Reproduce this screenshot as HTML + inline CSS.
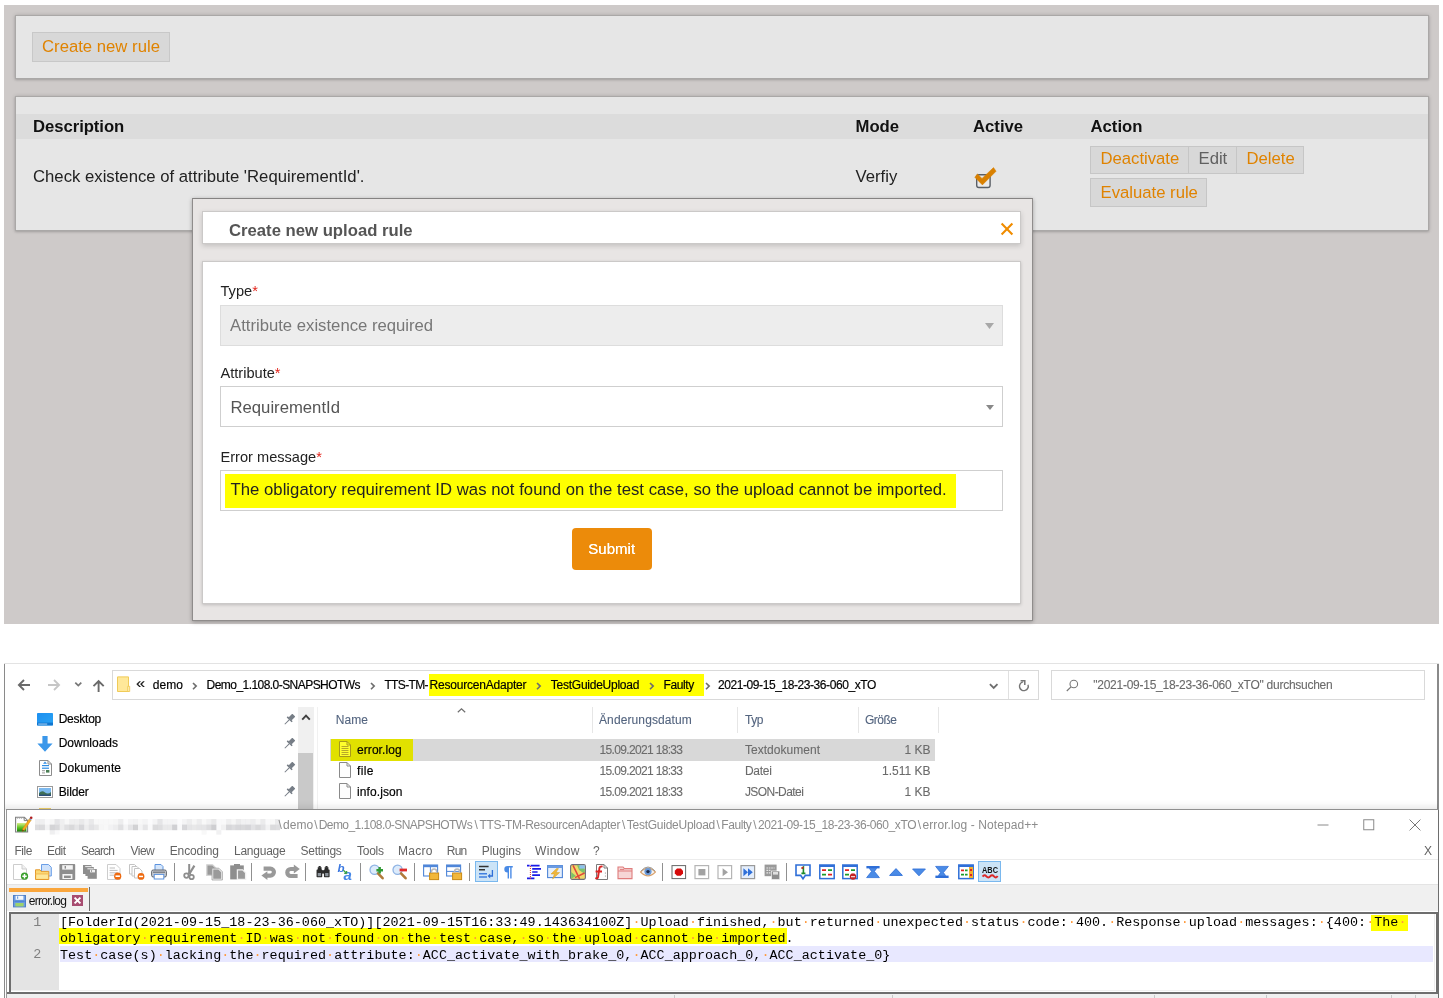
<!DOCTYPE html>
<html lang="en">
<head>
<meta charset="utf-8">
<title>Upload rule error</title>
<style>
*{box-sizing:border-box;margin:0;padding:0}
html,body{width:1443px;height:998px;overflow:hidden;background:#fff}
body{position:relative;font-family:"Liberation Sans",sans-serif;font-size:16px;color:#111}
.a{position:absolute}
svg{overflow:visible}
#page{position:absolute;left:0;top:0;width:1443px;height:998px;will-change:transform}
.t{position:absolute;white-space:pre;line-height:1}
</style>
</head>
<body>
<div id="page">
<div class="a" style="left:4px;top:5px;width:1435px;height:619px;background:#cecac9;"></div>
<div class="a" style="left:15px;top:15px;width:1414px;height:64px;background:#e6e6e6;border:1px solid #aaa8a7;box-shadow:0 0 4px rgba(0,0,0,.16),0 1px 2px rgba(0,0,0,.14);"></div>
<div class="a" style="left:32px;top:32px;width:138px;height:30px;background:#d8d8d8;border:1px solid #c8c8c8;"></div>
<div class="t" id="t1" style="top:39px;font-size:16.7px;color:#e08300;left:42px;letter-spacing:0.01px;">Create new rule</div>
<div class="a" style="left:15px;top:96px;width:1414px;height:135px;background:#e6e6e6;border:1px solid #aaa8a7;box-shadow:0 0 4px rgba(0,0,0,.16),0 1px 2px rgba(0,0,0,.14);"></div>
<div class="a" style="left:16px;top:114px;width:1412px;height:25px;background:#dcdcdc;"></div>
<div class="t" id="t2" style="top:119px;font-size:16.7px;color:#111;left:33px;font-weight:bold;letter-spacing:-0.05px;">Description</div>
<div class="t" id="t3" style="top:119px;font-size:16.7px;color:#111;left:855.5px;font-weight:bold;">Mode</div>
<div class="t" id="t4" style="top:119px;font-size:16.7px;color:#111;left:973px;font-weight:bold;">Active</div>
<div class="t" id="t5" style="top:119px;font-size:16.7px;color:#111;left:1090.5px;font-weight:bold;">Action</div>
<div class="t" id="t6" style="top:169px;font-size:16.7px;color:#222;left:33px;letter-spacing:0.01px;">Check existence of attribute 'RequirementId'.</div>
<div class="t" id="t7" style="top:169px;font-size:16.7px;color:#222;left:855.5px;">Verfiy</div>
<svg class="a" style="left:973px;top:166px;" width="26" height="25" viewBox="0 0 26 25"><rect x="3.7" y="8.7" width="13.4" height="12.8" rx="2.2" fill="#ebebeb" stroke="#5a5f66" stroke-width="1.4"/><path d="M1.8 11.3 L4.4 7.9 L9 12.4 L20.5 1.6 L23.1 5.2 L9.4 18.9 Z" fill="#d98000" stroke="#d98000" stroke-width=".5" stroke-linejoin="round"/></svg>
<div class="a" style="left:1090px;top:146px;width:99px;height:28px;background:#d8d8d8;border:1px solid #c6c6c6;"></div>
<div class="a" style="left:1188px;top:146px;width:49px;height:28px;background:#d8d8d8;border:1px solid #c6c6c6;"></div>
<div class="a" style="left:1236px;top:146px;width:68px;height:28px;background:#d8d8d8;border:1px solid #c6c6c6;"></div>
<div class="a" style="left:1090px;top:178px;width:117px;height:29px;background:#d8d8d8;border:1px solid #c6c6c6;"></div>
<div class="t" id="t8" style="top:151px;font-size:16.7px;color:#e08300;left:1100.5px;letter-spacing:-0.01px;">Deactivate</div>
<div class="t" id="t9" style="top:151px;font-size:16.7px;color:#606060;left:1198.5px;">Edit</div>
<div class="t" id="t10" style="top:151px;font-size:16.7px;color:#e08300;left:1246.5px;">Delete</div>
<div class="t" id="t11" style="top:185px;font-size:16.7px;color:#e08300;left:1100.5px;">Evaluate rule</div>
<div class="a" style="left:192px;top:198px;width:841px;height:423px;background:#e8e5e4;border:1px solid #8f8c8b;box-shadow:0 1px 4px rgba(0,0,0,.30);border-top-color:#858382;"></div>
<div class="a" style="left:202px;top:211px;width:819px;height:33px;background:#fff;border:1px solid #cbc9c8;box-shadow:0 2px 5px rgba(0,0,0,.16);"></div>
<div class="t" id="t12" style="top:223px;font-size:16.7px;color:#555;left:229px;font-weight:bold;">Create new upload rule</div>
<svg class="a" style="left:1000px;top:222px;" width="14" height="14" viewBox="0 0 14 14"><path d="M1.6 1.6 L12.4 12.4 M12.4 1.6 L1.6 12.4" stroke="#f08c00" stroke-width="2.1" fill="none"/></svg>
<div class="a" style="left:202px;top:261px;width:819px;height:343px;background:#fff;border:1px solid #cbc9c8;box-shadow:0 1px 3px rgba(0,0,0,.18);"></div>
<div class="t" id="t13" style="top:284px;font-size:14.6px;color:#222;left:220.5px;">Type<span style="color:#e3241b">*</span></div>
<div class="a" style="left:220px;top:305px;width:783px;height:41px;background:#ededed;border:1px solid #dddddd;"></div>
<div class="t" id="t14" style="top:318px;font-size:16.7px;color:#777;left:230px;">Attribute existence required</div>
<svg class="a" style="left:985px;top:323px;" width="9" height="6" viewBox="0 0 9 6"><path d="M0 0 H9 L4.5 6 Z" fill="#a8a8a8"/></svg>
<div class="t" id="t15" style="top:366px;font-size:14.6px;color:#222;left:220.5px;">Attribute<span style="color:#e3241b">*</span></div>
<div class="a" style="left:220px;top:386px;width:783px;height:41px;background:#fff;border:1px solid #cfcfcf;"></div>
<div class="t" id="t16" style="top:400px;font-size:16.7px;color:#555;left:230.5px;">RequirementId</div>
<svg class="a" style="left:986px;top:404.5px;" width="8" height="5" viewBox="0 0 8 5"><path d="M0 0 H8 L4 5 Z" fill="#888"/></svg>
<div class="t" id="t17" style="top:450px;font-size:14.6px;color:#222;left:220.5px;">Error message<span style="color:#e3241b">*</span></div>
<div class="a" style="left:220px;top:470px;width:783px;height:41px;background:#fff;border:1px solid #cfcfcf;"></div>
<div class="a" style="left:225px;top:474px;width:731px;height:34px;background:#ffff00;"></div>
<div class="t" id="t18" style="top:482px;font-size:16.7px;color:#222;left:230.5px;letter-spacing:0.03px;">The obligatory requirement ID was not found on the test case, so the upload cannot be imported.</div>
<div class="a" style="left:572px;top:528px;width:80px;height:42px;background:#ec8b0a;border-radius:4px;"></div>
<div class="t" id="t19" style="top:541px;font-size:15px;color:#fff;left:588.3px;letter-spacing:0.02px;text-shadow:0 0 .4px #fff;">Submit</div>
<div class="a" style="left:4px;top:663px;width:1435px;height:148px;background:#fff;"></div>
<div class="a" style="left:4px;top:663px;width:1435px;height:1px;background:#e3e3e3;"></div>
<div class="a" style="left:4px;top:664px;width:1px;height:146px;background:#8a8a8a;"></div>
<div class="a" style="left:1437px;top:664px;width:1.6px;height:146px;background:#8a8a8a;"></div>
<svg class="a" style="left:17px;top:678px;" width="15" height="14" viewBox="0 0 15 14"><path d="M13 7 H2.2 M7 2 L1.9 7 L7 12" fill="none" stroke="#6a6a6a" stroke-width="1.9"/></svg>
<svg class="a" style="left:46px;top:678px;" width="15" height="14" viewBox="0 0 15 14"><path d="M2 7 H12.8 M8 2 L13.1 7 L8 12" fill="none" stroke="#c6c6c6" stroke-width="1.8"/></svg>
<svg class="a" style="left:74px;top:681px;" width="9" height="7" viewBox="0 0 9 7"><path d="M1.3 1.6 L4.3 4.6 L7.3 1.6" fill="none" stroke="#777" stroke-width="1.7"/></svg>
<svg class="a" style="left:92px;top:679px;" width="14" height="14" viewBox="0 0 14 14"><path d="M6.6 13 V2.2 M1.5 7.2 L6.6 2 L11.7 7.2" fill="none" stroke="#6a6a6a" stroke-width="1.9"/></svg>
<div class="a" style="left:112px;top:670px;width:927px;height:30px;background:#fff;border:1px solid #d9d9d9;"></div>
<div class="a" style="left:1008px;top:671px;width:1px;height:28px;background:#e0e0e0;"></div>
<svg class="a" style="left:117px;top:676px;" width="14" height="17" viewBox="0 0 14 17"><path d="M.5 .9 H11.5 V15.5 H.5 Z" fill="#ffe899" stroke="#f0cb58" stroke-width="1"/><path d="M10.7 10.3 H12.7 V15.5 H10.7 Z" fill="#fff0b8" stroke="#f0cb58" stroke-width=".9"/></svg>
<div class="a" style="left:428.5px;top:674px;width:275px;height:22px;background:#ffff00;"></div>
<div class="t" id="t20" style="top:675px;font-size:15px;color:#111;left:135.8px;transform:scaleX(1.1);transform-origin:0 0;-webkit-text-stroke:.1px #111;">«</div>
<div class="t" id="t21" style="top:679px;font-size:12px;color:#000;left:152.7px;letter-spacing:0.09px;-webkit-text-stroke:.18px #000;">demo</div>
<div class="t" id="t22" style="top:679px;font-size:12px;color:#000;left:206.6px;letter-spacing:-0.55px;-webkit-text-stroke:.18px #000;">Demo_1.108.0-SNAPSHOTWs</div>
<div class="t" id="t23" style="top:679px;font-size:12px;color:#000;left:384.4px;letter-spacing:-0.63px;-webkit-text-stroke:.18px #000;">TTS-TM-</div>
<div class="t" id="t24" style="top:679px;font-size:12px;color:#000;left:429.5px;letter-spacing:-0.2px;-webkit-text-stroke:.18px #000;">ResourcenAdapter</div>
<div class="t" id="t25" style="top:679px;font-size:12px;color:#000;left:550.8px;letter-spacing:-0.25px;-webkit-text-stroke:.18px #000;">TestGuideUpload</div>
<div class="t" id="t26" style="top:679px;font-size:12px;color:#000;left:663.6px;letter-spacing:-0.4px;-webkit-text-stroke:.18px #000;">Faulty</div>
<div class="t" id="t27" style="top:679px;font-size:12px;color:#000;left:718px;letter-spacing:-0.42px;-webkit-text-stroke:.18px #000;">2021-09-15_18-23-36-060_xTO</div>
<svg class="a" style="left:192.1px;top:681.6px;" width="6" height="8" viewBox="0 0 6 8"><path d="M1 1 L4.2 4.1 L1 7.2" fill="none" stroke="#6e6e6e" stroke-width="1.6"/></svg>
<svg class="a" style="left:369.5px;top:681.6px;" width="6" height="8" viewBox="0 0 6 8"><path d="M1 1 L4.2 4.1 L1 7.2" fill="none" stroke="#6e6e6e" stroke-width="1.6"/></svg>
<svg class="a" style="left:536.2px;top:681.6px;" width="6" height="8" viewBox="0 0 6 8"><path d="M1 1 L4.2 4.1 L1 7.2" fill="none" stroke="#6e6e6e" stroke-width="1.6"/></svg>
<svg class="a" style="left:648.8px;top:681.6px;" width="6" height="8" viewBox="0 0 6 8"><path d="M1 1 L4.2 4.1 L1 7.2" fill="none" stroke="#6e6e6e" stroke-width="1.6"/></svg>
<svg class="a" style="left:704.5px;top:681.6px;" width="6" height="8" viewBox="0 0 6 8"><path d="M1 1 L4.2 4.1 L1 7.2" fill="none" stroke="#6e6e6e" stroke-width="1.6"/></svg>
<svg class="a" style="left:989px;top:683px;" width="10" height="7" viewBox="0 0 10 7"><path d="M.9 1.2 L4.7 5 L8.5 1.2" fill="none" stroke="#6e6e6e" stroke-width="1.8"/></svg>
<svg class="a" style="left:1017px;top:679px;" width="13" height="13" viewBox="0 0 13 13"><path d="M11 5.7 A4.4 4.4 0 1 1 6.1 2.9" fill="none" stroke="#757575" stroke-width="1.4"/><path d="M3.6 1.8 H7.8 V6" fill="none" stroke="#757575" stroke-width="1.5"/></svg>
<div class="a" style="left:1051px;top:670px;width:374px;height:30px;background:#fff;border:1px solid #d9d9d9;"></div>
<svg class="a" style="left:1066px;top:679px;" width="13" height="13" viewBox="0 0 13 13"><circle cx="7.8" cy="5" r="3.8" fill="none" stroke="#777" stroke-width="1.1"/><path d="M5 7.8 L.8 12" stroke="#777" stroke-width="1.2"/></svg>
<div class="t" id="t28" style="top:679px;font-size:12px;color:#6a6a6a;left:1093.3px;letter-spacing:-0.26px;-webkit-text-stroke:.1px #6a6a6a;">"2021-09-15_18-23-36-060_xTO" durchsuchen</div>
<div class="t" id="t29" style="top:713px;font-size:12px;color:#000;left:58.7px;letter-spacing:-0.24px;-webkit-text-stroke:.18px #000;">Desktop</div>
<div class="t" id="t30" style="top:737px;font-size:12px;color:#000;left:58.7px;letter-spacing:-0.01px;-webkit-text-stroke:.18px #000;">Downloads</div>
<div class="t" id="t31" style="top:762px;font-size:12px;color:#000;left:58.7px;letter-spacing:0.12px;-webkit-text-stroke:.18px #000;">Dokumente</div>
<div class="t" id="t32" style="top:786px;font-size:12px;color:#000;left:58.7px;letter-spacing:-0.1px;-webkit-text-stroke:.18px #000;">Bilder</div>
<svg class="a" style="left:37px;top:713px;" width="16" height="13" viewBox="0 0 16 13"><defs><linearGradient id="dg" x1="0" y1="0" x2="1" y2="1"><stop offset="0" stop-color="#1c8ff0"/><stop offset="1" stop-color="#2aa4f4"/></linearGradient></defs><rect x="0" y="0" width="16" height="12.4" rx=".8" fill="url(#dg)"/><rect x="0" y="9.6" width="16" height="2.8" fill="#1176cf"/><rect x="1.2" y="10.6" width="9" height=".9" fill="#bfe0fa"/></svg>
<svg class="a" style="left:37px;top:735.5px;" width="16" height="16" viewBox="0 0 16 16"><path d="M5.4 0 H10.6 V7.4 H15.6 L8 15.8 L.4 7.4 H5.4 Z" fill="#3b97ea"/></svg>
<svg class="a" style="left:39px;top:760px;" width="13" height="16" viewBox="0 0 13 16"><path d="M.5 .5 H9 L12.5 4 V15.5 H.5 Z" fill="#fff" stroke="#8c8c8c"/><path d="M9 .5 V4 H12.5" fill="none" stroke="#8c8c8c"/><rect x="3" y="5" width="7" height="1.2" fill="#2f8de4"/><rect x="3" y="7.6" width="7" height="1.2" fill="#2f8de4"/><rect x="3" y="10.2" width="3" height="1" fill="#9a9a9a"/><rect x="7" y="10" width="3.4" height="2.6" fill="#4a7e54"/><rect x="3" y="12.4" width="3" height="1" fill="#9a9a9a"/><path d="M4 3.8 L6 1.6 L8 3.8 Z" fill="#2f8de4"/></svg>
<svg class="a" style="left:37px;top:786px;" width="16" height="12" viewBox="0 0 16 12"><rect x=".5" y=".5" width="15" height="11" fill="#fff" stroke="#9a9a9a"/><rect x="2" y="2" width="12" height="8" fill="#7db9ee"/><path d="M2 7 Q5 4 8 6.4 T14 6 V10 H2 Z" fill="#3f6f56"/><rect x="2" y="8.6" width="12" height="1.4" fill="#2c4d7a"/></svg>
<svg class="a" style="left:283.5px;top:714px;" width="11" height="11" viewBox="0 0 11 11"><g transform="rotate(45 5.5 5.5)" fill="#767d86"><rect x="3.4" y="-0.6" width="4.2" height="5.2" rx=".5"/><rect x="2" y="4.4" width="7" height="1.6" rx=".4"/><rect x="5" y="6" width="1" height="6.2"/></g></svg>
<svg class="a" style="left:283.5px;top:738px;" width="11" height="11" viewBox="0 0 11 11"><g transform="rotate(45 5.5 5.5)" fill="#767d86"><rect x="3.4" y="-0.6" width="4.2" height="5.2" rx=".5"/><rect x="2" y="4.4" width="7" height="1.6" rx=".4"/><rect x="5" y="6" width="1" height="6.2"/></g></svg>
<svg class="a" style="left:283.5px;top:762px;" width="11" height="11" viewBox="0 0 11 11"><g transform="rotate(45 5.5 5.5)" fill="#767d86"><rect x="3.4" y="-0.6" width="4.2" height="5.2" rx=".5"/><rect x="2" y="4.4" width="7" height="1.6" rx=".4"/><rect x="5" y="6" width="1" height="6.2"/></g></svg>
<svg class="a" style="left:283.5px;top:786px;" width="11" height="11" viewBox="0 0 11 11"><g transform="rotate(45 5.5 5.5)" fill="#767d86"><rect x="3.4" y="-0.6" width="4.2" height="5.2" rx=".5"/><rect x="2" y="4.4" width="7" height="1.6" rx=".4"/><rect x="5" y="6" width="1" height="6.2"/></g></svg>
<div class="a" style="left:298px;top:707px;width:16px;height:103px;background:#f0f0f0;"></div>
<svg class="a" style="left:301px;top:713px;" width="10" height="8" viewBox="0 0 10 8"><path d="M1.2 6.6 L5 2.6 L8.8 6.6" fill="none" stroke="#404040" stroke-width="1.9"/></svg>
<div class="a" style="left:298px;top:753px;width:15px;height:57px;background:#c9c9c9;"></div>
<div class="a" style="left:316.5px;top:707px;width:1px;height:103px;background:#f1f1f1;"></div>
<div class="t" id="t33" style="top:714px;font-size:12px;color:#53647f;left:335.8px;letter-spacing:0.06px;-webkit-text-stroke:.1px #53647f;">Name</div>
<div class="t" id="t34" style="top:714px;font-size:12px;color:#53647f;left:599px;letter-spacing:0.11px;-webkit-text-stroke:.1px #53647f;">Änderungsdatum</div>
<div class="t" id="t35" style="top:714px;font-size:12px;color:#53647f;left:744.9px;letter-spacing:-0.42px;-webkit-text-stroke:.1px #53647f;">Typ</div>
<div class="t" id="t36" style="top:714px;font-size:12px;color:#53647f;left:865px;letter-spacing:-0.5px;-webkit-text-stroke:.1px #53647f;">Größe</div>
<svg class="a" style="left:456.5px;top:707.5px;" width="9" height="5" viewBox="0 0 9 5"><path d="M.8 4.3 L4.5 .9 L8.2 4.3" fill="none" stroke="#6e6e6e" stroke-width="1.2"/></svg>
<div class="a" style="left:591.5px;top:707px;width:1px;height:26px;background:#e6e6e6;"></div>
<div class="a" style="left:737px;top:707px;width:1px;height:26px;background:#e6e6e6;"></div>
<div class="a" style="left:857.5px;top:707px;width:1px;height:26px;background:#e6e6e6;"></div>
<div class="a" style="left:938px;top:707px;width:1px;height:26px;background:#e6e6e6;"></div>
<div class="a" style="left:330px;top:739px;width:605px;height:22px;background:#d8d8d8;"></div>
<div class="a" style="left:330.5px;top:738.5px;width:82.5px;height:22.5px;background:#e1e100;"></div>
<svg class="a" style="left:338.5px;top:741px;" width="12" height="16" viewBox="0 0 12 16"><path d="M.5 .5 H8 L11.5 4 V15.5 H.5 Z" fill="#ffff2e" stroke="#a89a1a" stroke-width="1"/><path d="M8 .5 V4 H11.5" fill="none" stroke="#a89a1a" stroke-width="1"/><rect x="2.5" y="5" width="7" height="1" fill="#b8a828"/><rect x="2.5" y="7" width="7" height="1" fill="#b8a828"/><rect x="2.5" y="9" width="7" height="1" fill="#b8a828"/><rect x="2.5" y="11" width="7" height="1" fill="#b8a828"/><rect x="2.5" y="13" width="7" height="1" fill="#b8a828"/></svg>
<svg class="a" style="left:338.5px;top:762px;" width="12" height="16" viewBox="0 0 12 16"><path d="M.5 .5 H8 L11.5 4 V15.5 H.5 Z" fill="#fdfdfd" stroke="#8a8a8a" stroke-width="1"/><path d="M8 .5 V4 H11.5" fill="none" stroke="#8a8a8a" stroke-width="1"/></svg>
<svg class="a" style="left:338.5px;top:783px;" width="12" height="16" viewBox="0 0 12 16"><path d="M.5 .5 H8 L11.5 4 V15.5 H.5 Z" fill="#fdfdfd" stroke="#8a8a8a" stroke-width="1"/><path d="M8 .5 V4 H11.5" fill="none" stroke="#8a8a8a" stroke-width="1"/></svg>
<div class="t" id="t37" style="top:744px;font-size:12px;color:#000;left:357px;letter-spacing:0.07px;-webkit-text-stroke:.18px #000;">error.log</div>
<div class="t" id="t38" style="top:765px;font-size:12px;color:#000;left:357px;letter-spacing:0.32px;-webkit-text-stroke:.18px #000;">file</div>
<div class="t" id="t39" style="top:786px;font-size:12px;color:#000;left:357px;letter-spacing:0.1px;-webkit-text-stroke:.18px #000;">info.json</div>
<div class="t" id="t40" style="top:744px;font-size:12px;color:#6b6b6b;left:599.5px;letter-spacing:-0.66px;-webkit-text-stroke:.1px #6b6b6b;">15.09.2021 18:33</div>
<div class="t" id="t41" style="top:744px;font-size:12px;color:#6b6b6b;left:744.9px;letter-spacing:0.05px;-webkit-text-stroke:.1px #6b6b6b;">Textdokument</div>
<div class="t" id="t42" style="top:744px;font-size:12px;color:#6b6b6b;right:512.5px;-webkit-text-stroke:.1px #6b6b6b;">1 KB</div>
<div class="t" id="t43" style="top:765px;font-size:12px;color:#6b6b6b;left:599.5px;letter-spacing:-0.66px;-webkit-text-stroke:.1px #6b6b6b;">15.09.2021 18:33</div>
<div class="t" id="t44" style="top:765px;font-size:12px;color:#6b6b6b;left:744.9px;letter-spacing:-0.25px;-webkit-text-stroke:.1px #6b6b6b;">Datei</div>
<div class="t" id="t45" style="top:765px;font-size:12px;color:#6b6b6b;right:512.5px;-webkit-text-stroke:.1px #6b6b6b;">1.511 KB</div>
<div class="t" id="t46" style="top:786px;font-size:12px;color:#6b6b6b;left:599.5px;letter-spacing:-0.66px;-webkit-text-stroke:.1px #6b6b6b;">15.09.2021 18:33</div>
<div class="t" id="t47" style="top:786px;font-size:12px;color:#6b6b6b;left:744.9px;letter-spacing:-0.56px;-webkit-text-stroke:.1px #6b6b6b;">JSON-Datei</div>
<div class="t" id="t48" style="top:786px;font-size:12px;color:#6b6b6b;right:512.5px;-webkit-text-stroke:.1px #6b6b6b;">1 KB</div>
<div class="a" style="left:39px;top:807.5px;width:12px;height:2.5px;background:#f3d36b;"></div>
<div class="a" style="left:5px;top:799px;width:1433px;height:11px;background:linear-gradient(to bottom,rgba(0,0,0,0),rgba(0,0,0,.015) 40%,rgba(0,0,0,.085));"></div>
<div class="a" style="left:5px;top:810px;width:1434px;height:188px;background:#fff;"></div>
<div class="a" style="left:6px;top:809px;width:1433px;height:1px;background:#8f8f8f;"></div>
<div class="a" style="left:4px;top:809px;width:1px;height:189px;background:#8a8a8a;"></div>
<div class="a" style="left:6px;top:810px;width:1px;height:188px;background:#999999;"></div>
<div class="a" style="left:1438px;top:810px;width:1px;height:188px;background:#6e6e6e;"></div>
<svg class="a" style="left:14.5px;top:816px;" width="17" height="17" viewBox="0 0 17 17"><defs><linearGradient id="ng" x1="0" y1="0" x2="0" y2="1"><stop offset="0" stop-color="#d8ee8a"/><stop offset=".55" stop-color="#58c020"/><stop offset="1" stop-color="#1c7a10"/></linearGradient></defs><path d="M.6 1.2 H9.4 L12.6 4.4 V16 H.6 Z" fill="#fff" stroke="#7e7e7e" stroke-width="1.1"/><path d="M9.2 1.2 V4.6 H12.6" fill="none" stroke="#7e7e7e" stroke-width="1"/><path d="M1.4 1.2 l1 1.3 1 -1.3 1 1.3 1 -1.3 1 1.3 1 -1.3 1 1.3" fill="none" stroke="#9a9a9a" stroke-width=".8"/><rect x="2" y="7" width="9.4" height="8.6" fill="url(#ng)"/><path d="M14.4 2.6 L16.2 4 L9.4 14.2 L7.4 15.4 L7.6 13 Z" fill="#f5a81c" stroke="#d88a10" stroke-width=".5"/><path d="M14.1 3 L14.9 1.9 L16.7 3.2 L15.9 4.4 Z" fill="#7f9fd0"/><circle cx="16.2" cy="1.8" r="1.3" fill="#b01c1c"/><path d="M7.5 13.6 L7.3 15.5 L9 14.6 Z" fill="#3a2a1a"/></svg>
<svg class="a" style="left:35px;top:818px;" width="246" height="18" viewBox="0 0 246 18"><rect x="0" y="1" width="5" height="5.6" fill="#4a4a55" fill-opacity="0.09"/><rect x="0" y="6.6" width="5" height="5.6" fill="#4a4a55" fill-opacity="0.19"/><rect x="4.9" y="1" width="5" height="5.6" fill="#4a4a55" fill-opacity="0.09"/><rect x="4.9" y="6.6" width="5" height="5.6" fill="#4a4a55" fill-opacity="0.20"/><rect x="9.8" y="1" width="5" height="5.6" fill="#4a4a55" fill-opacity="0.03"/><rect x="9.8" y="6.6" width="5" height="5.6" fill="#4a4a55" fill-opacity="0.07"/><rect x="14.7" y="1" width="5" height="5.6" fill="#4a4a55" fill-opacity="0.05"/><rect x="14.7" y="6.6" width="5" height="5.6" fill="#4a4a55" fill-opacity="0.24"/><rect x="14.7" y="12.2" width="5" height="4.4" fill="#4a4a55" fill-opacity="0.09"/><rect x="19.6" y="1" width="5" height="5.6" fill="#4a4a55" fill-opacity="0.14"/><rect x="19.6" y="6.6" width="5" height="5.6" fill="#4a4a55" fill-opacity="0.21"/><rect x="19.6" y="12.2" width="5" height="4.4" fill="#4a4a55" fill-opacity="0.03"/><rect x="24.5" y="1" width="5" height="5.6" fill="#4a4a55" fill-opacity="0.09"/><rect x="24.5" y="6.6" width="5" height="5.6" fill="#4a4a55" fill-opacity="0.10"/><rect x="29.4" y="1" width="5" height="5.6" fill="#4a4a55" fill-opacity="0.04"/><rect x="29.4" y="6.6" width="5" height="5.6" fill="#4a4a55" fill-opacity="0.17"/><rect x="34.3" y="1" width="5" height="5.6" fill="#4a4a55" fill-opacity="0.09"/><rect x="34.3" y="6.6" width="5" height="5.6" fill="#4a4a55" fill-opacity="0.21"/><rect x="39.2" y="1" width="5" height="5.6" fill="#4a4a55" fill-opacity="0.09"/><rect x="39.2" y="6.6" width="5" height="5.6" fill="#4a4a55" fill-opacity="0.14"/><rect x="44.1" y="1" width="5" height="5.6" fill="#4a4a55" fill-opacity="0.12"/><rect x="44.1" y="6.6" width="5" height="5.6" fill="#4a4a55" fill-opacity="0.22"/><rect x="49" y="1" width="5" height="5.6" fill="#4a4a55" fill-opacity="0.07"/><rect x="49" y="6.6" width="5" height="5.6" fill="#4a4a55" fill-opacity="0.10"/><rect x="53.9" y="1" width="5" height="5.6" fill="#4a4a55" fill-opacity="0.12"/><rect x="53.9" y="6.6" width="5" height="5.6" fill="#4a4a55" fill-opacity="0.16"/><rect x="58.8" y="1" width="5" height="5.6" fill="#4a4a55" fill-opacity="0.04"/><rect x="58.8" y="6.6" width="5" height="5.6" fill="#4a4a55" fill-opacity="0.13"/><rect x="63.7" y="1" width="5" height="5.6" fill="#4a4a55" fill-opacity="0.04"/><rect x="63.7" y="6.6" width="5" height="5.6" fill="#4a4a55" fill-opacity="0.05"/><rect x="68.6" y="1" width="5" height="5.6" fill="#4a4a55" fill-opacity="0.04"/><rect x="68.6" y="6.6" width="5" height="5.6" fill="#4a4a55" fill-opacity="0.04"/><rect x="73.5" y="1" width="5" height="5.6" fill="#4a4a55" fill-opacity="0.04"/><rect x="73.5" y="6.6" width="5" height="5.6" fill="#4a4a55" fill-opacity="0.07"/><rect x="78.4" y="1" width="5" height="5.6" fill="#4a4a55" fill-opacity="0.05"/><rect x="78.4" y="6.6" width="5" height="5.6" fill="#4a4a55" fill-opacity="0.10"/><rect x="83.3" y="1" width="5" height="5.6" fill="#4a4a55" fill-opacity="0.10"/><rect x="83.3" y="6.6" width="5" height="5.6" fill="#4a4a55" fill-opacity="0.17"/><rect x="88.2" y="1" width="5" height="5.6" fill="#4a4a55" fill-opacity="0.02"/><rect x="88.2" y="6.6" width="5" height="5.6" fill="#4a4a55" fill-opacity="0.06"/><rect x="93.1" y="1" width="5" height="5.6" fill="#4a4a55" fill-opacity="0.06"/><rect x="93.1" y="6.6" width="5" height="5.6" fill="#4a4a55" fill-opacity="0.14"/><rect x="98" y="1" width="5" height="5.6" fill="#4a4a55" fill-opacity="0.07"/><rect x="98" y="6.6" width="5" height="5.6" fill="#4a4a55" fill-opacity="0.25"/><rect x="102.9" y="1" width="5" height="5.6" fill="#4a4a55" fill-opacity="0.04"/><rect x="102.9" y="6.6" width="5" height="5.6" fill="#4a4a55" fill-opacity="0.06"/><rect x="107.8" y="1" width="5" height="5.6" fill="#4a4a55" fill-opacity="0.06"/><rect x="107.8" y="6.6" width="5" height="5.6" fill="#4a4a55" fill-opacity="0.14"/><rect x="112.7" y="1" width="5" height="5.6" fill="#4a4a55" fill-opacity="0.02"/><rect x="112.7" y="6.6" width="5" height="5.6" fill="#4a4a55" fill-opacity="0.03"/><rect x="117.6" y="1" width="5" height="5.6" fill="#4a4a55" fill-opacity="0.06"/><rect x="117.6" y="6.6" width="5" height="5.6" fill="#4a4a55" fill-opacity="0.20"/><rect x="122.5" y="1" width="5" height="5.6" fill="#4a4a55" fill-opacity="0.14"/><rect x="122.5" y="6.6" width="5" height="5.6" fill="#4a4a55" fill-opacity="0.18"/><rect x="127.4" y="1" width="5" height="5.6" fill="#4a4a55" fill-opacity="0.06"/><rect x="127.4" y="6.6" width="5" height="5.6" fill="#4a4a55" fill-opacity="0.12"/><rect x="132.3" y="1" width="5" height="5.6" fill="#4a4a55" fill-opacity="0.06"/><rect x="132.3" y="6.6" width="5" height="5.6" fill="#4a4a55" fill-opacity="0.12"/><rect x="137.2" y="1" width="5" height="5.6" fill="#4a4a55" fill-opacity="0.06"/><rect x="137.2" y="6.6" width="5" height="5.6" fill="#4a4a55" fill-opacity="0.26"/><rect x="142.1" y="1" width="5" height="5.6" fill="#4a4a55" fill-opacity="0.02"/><rect x="142.1" y="6.6" width="5" height="5.6" fill="#4a4a55" fill-opacity="0.03"/><rect x="147" y="1" width="5" height="5.6" fill="#4a4a55" fill-opacity="0.06"/><rect x="147" y="6.6" width="5" height="5.6" fill="#4a4a55" fill-opacity="0.22"/><rect x="151.9" y="1" width="5" height="5.6" fill="#4a4a55" fill-opacity="0.10"/><rect x="151.9" y="6.6" width="5" height="5.6" fill="#4a4a55" fill-opacity="0.14"/><rect x="156.8" y="1" width="5" height="5.6" fill="#4a4a55" fill-opacity="0.05"/><rect x="156.8" y="6.6" width="5" height="5.6" fill="#4a4a55" fill-opacity="0.13"/><rect x="161.7" y="1" width="5" height="5.6" fill="#4a4a55" fill-opacity="0.10"/><rect x="161.7" y="6.6" width="5" height="5.6" fill="#4a4a55" fill-opacity="0.14"/><rect x="166.6" y="1" width="5" height="5.6" fill="#4a4a55" fill-opacity="0.04"/><rect x="166.6" y="6.6" width="5" height="5.6" fill="#4a4a55" fill-opacity="0.14"/><rect x="166.6" y="12.2" width="5" height="4.4" fill="#4a4a55" fill-opacity="0.04"/><rect x="171.5" y="1" width="5" height="5.6" fill="#4a4a55" fill-opacity="0.08"/><rect x="171.5" y="6.6" width="5" height="5.6" fill="#4a4a55" fill-opacity="0.19"/><rect x="176.4" y="1" width="5" height="5.6" fill="#4a4a55" fill-opacity="0.13"/><rect x="176.4" y="6.6" width="5" height="5.6" fill="#4a4a55" fill-opacity="0.27"/><rect x="181.3" y="1" width="5" height="5.6" fill="#4a4a55" fill-opacity="0.03"/><rect x="181.3" y="6.6" width="5" height="5.6" fill="#4a4a55" fill-opacity="0.03"/><rect x="181.3" y="12.2" width="5" height="4.4" fill="#4a4a55" fill-opacity="0.08"/><rect x="186.2" y="1" width="5" height="5.6" fill="#4a4a55" fill-opacity="0.03"/><rect x="186.2" y="6.6" width="5" height="5.6" fill="#4a4a55" fill-opacity="0.08"/><rect x="191.1" y="1" width="5" height="5.6" fill="#4a4a55" fill-opacity="0.09"/><rect x="191.1" y="6.6" width="5" height="5.6" fill="#4a4a55" fill-opacity="0.22"/><rect x="196" y="1" width="5" height="5.6" fill="#4a4a55" fill-opacity="0.05"/><rect x="196" y="6.6" width="5" height="5.6" fill="#4a4a55" fill-opacity="0.19"/><rect x="200.9" y="1" width="5" height="5.6" fill="#4a4a55" fill-opacity="0.11"/><rect x="200.9" y="6.6" width="5" height="5.6" fill="#4a4a55" fill-opacity="0.22"/><rect x="205.8" y="1" width="5" height="5.6" fill="#4a4a55" fill-opacity="0.08"/><rect x="205.8" y="6.6" width="5" height="5.6" fill="#4a4a55" fill-opacity="0.21"/><rect x="210.7" y="1" width="5" height="5.6" fill="#4a4a55" fill-opacity="0.08"/><rect x="210.7" y="6.6" width="5" height="5.6" fill="#4a4a55" fill-opacity="0.23"/><rect x="215.6" y="1" width="5" height="5.6" fill="#4a4a55" fill-opacity="0.10"/><rect x="215.6" y="6.6" width="5" height="5.6" fill="#4a4a55" fill-opacity="0.16"/><rect x="220.5" y="1" width="5" height="5.6" fill="#4a4a55" fill-opacity="0.05"/><rect x="220.5" y="6.6" width="5" height="5.6" fill="#4a4a55" fill-opacity="0.21"/><rect x="225.4" y="1" width="5" height="5.6" fill="#4a4a55" fill-opacity="0.11"/><rect x="225.4" y="6.6" width="5" height="5.6" fill="#4a4a55" fill-opacity="0.16"/><rect x="230.3" y="1" width="5" height="5.6" fill="#4a4a55" fill-opacity="0.03"/><rect x="230.3" y="6.6" width="5" height="5.6" fill="#4a4a55" fill-opacity="0.07"/><rect x="235.2" y="1" width="5" height="5.6" fill="#4a4a55" fill-opacity="0.04"/><rect x="235.2" y="6.6" width="5" height="5.6" fill="#4a4a55" fill-opacity="0.20"/><rect x="240.1" y="1" width="5" height="5.6" fill="#4a4a55" fill-opacity="0.11"/><rect x="240.1" y="6.6" width="5" height="5.6" fill="#4a4a55" fill-opacity="0.18"/></svg>
<div class="t" id="t49" style="top:819px;font-size:12px;color:#8c8c8c;left:278.55px;">\</div>
<div class="t" id="t50" style="top:819px;font-size:12px;color:#8c8c8c;left:283px;letter-spacing:0.09px;">demo</div>
<div class="t" id="t51" style="top:819px;font-size:12px;color:#8c8c8c;left:314.3px;">\</div>
<div class="t" id="t52" style="top:819px;font-size:12px;color:#8c8c8c;left:318.7px;letter-spacing:-0.55px;">Demo_1.108.0-SNAPSHOTWs</div>
<div class="t" id="t53" style="top:819px;font-size:12px;color:#8c8c8c;left:474.4px;">\</div>
<div class="t" id="t54" style="top:819px;font-size:12px;color:#8c8c8c;left:479.6px;letter-spacing:-0.33px;">TTS-TM-ResourcenAdapter</div>
<div class="t" id="t55" style="top:819px;font-size:12px;color:#8c8c8c;left:621.95px;">\</div>
<div class="t" id="t56" style="top:819px;font-size:12px;color:#8c8c8c;left:626.8px;letter-spacing:-0.26px;">TestGuideUpload</div>
<div class="t" id="t57" style="top:819px;font-size:12px;color:#8c8c8c;left:716.55px;">\</div>
<div class="t" id="t58" style="top:819px;font-size:12px;color:#8c8c8c;left:721.3px;letter-spacing:-0.44px;">Faulty</div>
<div class="t" id="t59" style="top:819px;font-size:12px;color:#8c8c8c;left:753.15px;">\</div>
<div class="t" id="t60" style="top:819px;font-size:12px;color:#8c8c8c;left:757.9px;letter-spacing:-0.41px;">2021-09-15_18-23-36-060_xTO</div>
<div class="t" id="t61" style="top:819px;font-size:12px;color:#8c8c8c;left:917.75px;">\</div>
<div class="t" id="t62" style="top:819px;font-size:12px;color:#8c8c8c;left:922.5px;letter-spacing:0.09px;">error.log - Notepad++</div>
<svg class="a" style="left:1317px;top:819px;" width="12" height="12" viewBox="0 0 12 12"><path d="M.5 6 H11.5" stroke="#8a8a8a" stroke-width="1"/></svg>
<svg class="a" style="left:1363px;top:818.5px;" width="11.5" height="11.5" viewBox="0 0 11.5 11.5"><rect x=".75" y=".75" width="10" height="10" fill="none" stroke="#8a8a8a" stroke-width="1"/></svg>
<svg class="a" style="left:1409px;top:818.5px;" width="12" height="12" viewBox="0 0 12 12"><path d="M.6 .6 L11.4 11.4 M11.4 .6 L.6 11.4" stroke="#777" stroke-width="1"/></svg>
<div class="t" id="t63" style="top:845px;font-size:12px;color:#636363;left:14.5px;letter-spacing:-0.48px;">File</div>
<div class="t" id="t64" style="top:845px;font-size:12px;color:#636363;left:47px;letter-spacing:-0.56px;">Edit</div>
<div class="t" id="t65" style="top:845px;font-size:12px;color:#636363;left:81px;letter-spacing:-0.81px;">Search</div>
<div class="t" id="t66" style="top:845px;font-size:12px;color:#636363;left:130.5px;letter-spacing:-0.53px;">View</div>
<div class="t" id="t67" style="top:845px;font-size:12px;color:#636363;left:169.7px;letter-spacing:-0.11px;">Encoding</div>
<div class="t" id="t68" style="top:845px;font-size:12px;color:#636363;left:234px;letter-spacing:-0.24px;">Language</div>
<div class="t" id="t69" style="top:845px;font-size:12px;color:#636363;left:300.6px;letter-spacing:-0.31px;">Settings</div>
<div class="t" id="t70" style="top:845px;font-size:12px;color:#636363;left:357px;letter-spacing:-0.25px;">Tools</div>
<div class="t" id="t71" style="top:845px;font-size:12px;color:#636363;left:398px;letter-spacing:0.24px;">Macro</div>
<div class="t" id="t72" style="top:845px;font-size:12px;color:#636363;left:446.8px;letter-spacing:-0.81px;">Run</div>
<div class="t" id="t73" style="top:845px;font-size:12px;color:#636363;left:481.7px;letter-spacing:-0.01px;">Plugins</div>
<div class="t" id="t74" style="top:845px;font-size:12px;color:#636363;left:535px;letter-spacing:0.36px;">Window</div>
<div class="t" id="t75" style="top:845px;font-size:12px;color:#636363;left:593px;">?</div>
<div class="t" id="t76" style="top:845px;font-size:12px;color:#636363;left:1424px;">X</div>
<div class="a" style="left:7px;top:859px;width:1431px;height:1px;background:#ececec;"></div>
<div class="a" style="left:474.5px;top:861px;width:23px;height:21px;background:#cce4f7;border:1px solid #7ab8ee;"></div>
<div class="a" style="left:978px;top:861px;width:23px;height:21px;background:#cce4f7;border:1px solid #7ab8ee;"></div>
<svg class="a" style="left:13px;top:864px;" width="16" height="16" viewBox="0 0 16 16"><path d="M.5 .5 H9 L13.5 5 V15.5 H.5 Z" fill="#fff" stroke="#cdcdcd"/><path d="M9 .5 V5 H13.5" fill="#f1f1f1" stroke="#cdcdcd"/><circle cx="11.5" cy="12.2" r="3.6" fill="#3a9f2c"/><path d="M9.3 12.2 H13.7 M11.5 10 V14.4" stroke="#fff" stroke-width="1.5"/></svg>
<svg class="a" style="left:35px;top:864px;" width="16" height="16" viewBox="0 0 16 16"><path d="M6.5 .5 H13.5 L16.3 3.3 V12 H6.5 Z" fill="#cfe2fb" stroke="#6a9ee6"/><path d="M.5 5.8 H5 L6.2 7.4 H13.8 V15.5 H.5 Z" fill="#fbd873" stroke="#e59b2e"/><path d="M.5 10 H13.8" stroke="#f3b650" stroke-width="1"/><rect x="1.5" y="10.6" width="11.4" height="4" fill="#fde79a"/></svg>
<svg class="a" style="left:58.5px;top:864px;" width="16" height="16" viewBox="0 0 16 16"><rect x=".4" y="0" width="15.8" height="16" rx=".8" fill="#8e8e8e"/><rect x="3.2" y="1.2" width="10.6" height="4.4" fill="#f4f4f4"/><rect x="5.6" y="2" width="1.4" height="2.6" fill="#8e8e8e"/><rect x="3.4" y="10" width="10" height="5" fill="#f4f4f4"/><rect x="5" y="11.6" width="6.8" height="2.4" fill="#8e8e8e"/></svg>
<svg class="a" style="left:82px;top:864px;" width="16" height="16" viewBox="0 0 16 16"><g fill="#8e8e8e"><rect x="1" y="1" width="8.4" height="9"/><rect x="3.4" y="3" width="8.4" height="9"/><rect x="5.6" y="5" width="9.2" height="9.8"/></g><path d="M3.2 2.6 H9 M5.4 4.8 H11.4" stroke="#f0f0f0" stroke-width="1"/><rect x="8" y="5.8" width="5" height="2.6" fill="#f0f0f0"/><rect x="9" y="6.2" width="1" height="1.6" fill="#8e8e8e"/></svg>
<svg class="a" style="left:105.5px;top:864px;" width="16" height="16" viewBox="0 0 16 16"><path d="M1.5 .5 H10 L14 4.5 V15.5 H1.5 Z" fill="#fff" stroke="#cdcdcd"/><path d="M3.6 4 H9 M3.6 6.4 H11.6 M3.6 8.8 H11.6 M3.6 11.2 H8" stroke="#bdbdbd"/><circle cx="11.7" cy="12.2" r="3.6" fill="#ee6a10"/><rect x="9.5" y="11.4" width="4.4" height="1.6" fill="#fff"/></svg>
<svg class="a" style="left:128.5px;top:864px;" width="16" height="16" viewBox="0 0 16 16"><path d="M.5 .5 H5.5 L8 3 V10 H.5 Z" fill="#fff" stroke="#c4c4c4"/><path d="M3 2.5 H8 L10.5 5 V12 H3 Z" fill="#fff" stroke="#c4c4c4"/><path d="M5.5 4.5 H10.5 L13 7 V14 H5.5 Z" fill="#fff" stroke="#c4c4c4"/><circle cx="12" cy="12.4" r="3.4" fill="#ee6a10"/><rect x="10" y="11.7" width="4" height="1.5" fill="#fff"/></svg>
<svg class="a" style="left:151px;top:864px;" width="16" height="16" viewBox="0 0 16 16"><path d="M4 .5 H10 L12 2.5 V7 H4 Z" fill="#d5e6fb" stroke="#5d93de"/><rect x=".6" y="6" width="14.8" height="7" rx="1.6" fill="#c9ccd2" stroke="#63676e"/><rect x="3.2" y="10.4" width="9.6" height="4.6" fill="#fff" stroke="#5d93de"/><rect x="2" y="7.6" width="12" height="1.2" fill="#6f747c"/></svg>
<svg class="a" style="left:183px;top:864px;" width="16" height="16" viewBox="0 0 16 16"><g fill="none" stroke="#8e8e8e"><path d="M6.2 0 V8.6" stroke-width="2"/><path d="M11.4 1.6 L6.6 9.4" stroke-width="2.2"/><circle cx="3.4" cy="11.6" r="2.2" stroke-width="1.8"/><circle cx="8.6" cy="13" r="2.2" stroke-width="1.8"/><path d="M5 10 L6.6 8.4 L7.6 11" stroke-width="1.8"/></g></svg>
<svg class="a" style="left:206px;top:864px;" width="16" height="16" viewBox="0 0 16 16"><path d="M.8 .8 H6.6 L9.8 4 V11.4 H.8 Z" fill="#9a9a9a" stroke="#d4d4d4" stroke-width="1.3"/><path d="M6.6 4.8 H12.6 L15.8 8 V15.4 H6.6 Z" fill="#9a9a9a" stroke="#ececec" stroke-width="1.3"/><path d="M6 4.2 H12.9 L16.4 7.7 V16 H6 Z" fill="none" stroke="#9a9a9a" stroke-width=".7"/></svg>
<svg class="a" style="left:229.5px;top:864px;" width="16" height="16" viewBox="0 0 16 16"><rect x=".2" y="1.4" width="13.6" height="14" fill="#8e8e8e"/><rect x="4" y="0" width="6" height="2.6" fill="#8e8e8e"/><path d="M7.4 5.8 H12.6 L15.6 8.8 V15.4 H7.4 Z" fill="#9a9a9a" stroke="#f0f0f0" stroke-width="1.3"/></svg>
<svg class="a" style="left:260.5px;top:864px;" width="16" height="16" viewBox="0 0 16 16"><path d="M6 11.6 H9.4 A3.5 3.5 0 0 0 9.4 4.6 H2.6" fill="none" stroke="#999" stroke-width="4.2"/><path d="M6.4 7.2 L6.4 16 L.4 11.6 Z" fill="#999"/></svg>
<svg class="a" style="left:284px;top:864px;" width="16" height="16" viewBox="0 0 16 16"><path d="M10.4 5 H6.8 A3.5 3.5 0 0 0 6.8 12 H13.6" fill="none" stroke="#999" stroke-width="4.2"/><path d="M9.8 .6 L9.8 9.4 L15.8 5 Z" fill="#999"/></svg>
<svg class="a" style="left:315.5px;top:864px;" width="16" height="16" viewBox="0 0 16 16"><g transform="translate(.2 0) scale(.86 1)"><g fill="#2b2b2b"><rect x="1.8" y="3.2" width="4.4" height="3"/><rect x="9.8" y="3.2" width="4.4" height="3"/><rect x=".4" y="5.6" width="6.6" height="7.6" rx=".8"/><rect x="9" y="5.6" width="6.6" height="7.6" rx=".8"/><rect x="6.6" y="6.2" width="2.8" height="3.4"/><rect x="2.8" y="2" width="2.4" height="1.6"/><rect x="10.8" y="2" width="2.4" height="1.6"/></g><rect x="1.8" y="9" width="3.8" height="3.2" fill="#8d949c"/><rect x="10.4" y="9" width="3.8" height="3.2" fill="#8d949c"/></g></svg>
<svg class="a" style="left:338px;top:864px;" width="16" height="16" viewBox="0 0 16 16"><text x="-.6" y="8" font-family="Liberation Sans,sans-serif" font-size="11.5" font-weight="bold" font-style="italic" fill="#3c78e0">b</text><text x="5.6" y="15.6" font-family="Liberation Sans,sans-serif" font-size="15" font-weight="bold" font-style="italic" fill="#4688e8">a</text><path d="M5.4 6.2 L8.6 9.4 M8.6 9.4 V7 M8.6 9.4 H6.2" stroke="#3ba24a" stroke-width="1.3" fill="none"/></svg>
<svg class="a" style="left:369px;top:864px;" width="16" height="16" viewBox="0 0 16 16"><circle cx="5.6" cy="5.8" r="4.6" fill="#dcebfb" stroke="#8fb3e4" stroke-width="1.3"/><path d="M9 9.4 L13.6 14.2" stroke="#b07a3a" stroke-width="2.6" stroke-linecap="round"/><path d="M7.4 6.2 H14 M10.7 2.9 V9.5" stroke="#2f9a34" stroke-width="2.4"/></svg>
<svg class="a" style="left:392px;top:864px;" width="16" height="16" viewBox="0 0 16 16"><circle cx="5.6" cy="5.8" r="4.6" fill="#dcebfb" stroke="#8fb3e4" stroke-width="1.3"/><path d="M9 9.4 L13.6 14.2" stroke="#b07a3a" stroke-width="2.6" stroke-linecap="round"/><rect x="7.6" y="4.6" width="7.4" height="2.8" fill="#e02a2a"/></svg>
<svg class="a" style="left:423px;top:864px;" width="16" height="16" viewBox="0 0 16 16"><rect x=".6" y="1" width="14" height="11" fill="#fff" stroke="#4f86d8" stroke-width="1.1"/><rect x=".6" y="1" width="14" height="2.2" fill="#4f86d8"/><path d="M7.4 3 V12" stroke="#4f86d8"/><rect x="6.6" y="9" width="9" height="6.6" fill="#f2b73a" stroke="#c98a14"/><path d="M8.6 9 V7.6 A2.5 2.5 0 0 1 13.6 7.6 V9" fill="none" stroke="#b9b9b9" stroke-width="1.5"/></svg>
<svg class="a" style="left:446px;top:864px;" width="16" height="16" viewBox="0 0 16 16"><rect x=".6" y="1" width="14" height="11" fill="#fff" stroke="#4f86d8" stroke-width="1.1"/><rect x=".6" y="1" width="14" height="2.2" fill="#4f86d8"/><path d="M.6 7.4 H14.6" stroke="#4f86d8"/><rect x="6.6" y="9" width="9" height="6.6" fill="#f2b73a" stroke="#c98a14"/><path d="M8.6 9 V7.6 A2.5 2.5 0 0 1 13.6 7.6 V9" fill="none" stroke="#b9b9b9" stroke-width="1.5"/></svg>
<svg class="a" style="left:478px;top:864px;" width="16" height="16" viewBox="0 0 16 16"><path d="M1 2.6 H10.6 M1 5.8 H7" stroke="#333" stroke-width="1.5"/><path d="M1 9.8 H9 M1 13 H9" stroke="#3f7fe0" stroke-width="1.5"/><path d="M14.4 6 V12 H11" fill="none" stroke="#2f6fd8" stroke-width="1.3"/><path d="M12.2 9.6 L9.6 12 L12.2 14.4 Z" fill="#2f6fd8"/></svg>
<svg class="a" style="left:499.5px;top:864px;" width="16" height="16" viewBox="0 0 16 16"><path d="M7.6 2 H12.8 V3.4 H11.6 V14.4 H10.2 V3.4 H9 V14.4 H7.6 V8.6 A3.3 3.3 0 0 1 7.6 2 Z" fill="#4a8be6"/></svg>
<svg class="a" style="left:525.5px;top:864px;" width="16" height="16" viewBox="0 0 16 16"><path d="M4.6 1.6 H13.6 M6.2 4.8 H15 M6.2 8 H11.6 M6.2 11.2 H14 M1 14.4 H8.4 M1 1.6 H3.6" stroke="#1a1ae6" stroke-width="1.7"/><path d="M4.4 2 V16" stroke="#e02a2a" stroke-width="1" stroke-dasharray="1 1"/></svg>
<svg class="a" style="left:546.5px;top:864px;" width="16" height="16" viewBox="0 0 16 16"><rect x=".6" y="1.6" width="14.8" height="12" fill="#e6effb" stroke="#4f86d8" stroke-width="1.1"/><rect x=".6" y="1.6" width="14.8" height="2.4" fill="#6b9be2"/><path d="M9.6 4.6 L4 10 H7.4 L5.6 15 L12.6 8.6 H9 L11.4 4.6 Z" fill="#f0b73a" stroke="#d39a22" stroke-width=".5"/></svg>
<svg class="a" style="left:570px;top:864px;" width="16" height="16" viewBox="0 0 16 16"><rect x=".6" y=".6" width="14.8" height="14.8" rx="1.6" fill="#efd96a" stroke="#6e6e7a" stroke-width="1.1"/><path d="M1.2 8 L6 12 L1.2 14.8 Z M7 1.2 H11 L14.8 5 V10 L9 6 Z" fill="#7cc468"/><rect x="9.4" y="1.2" width="5.4" height="3.4" fill="#8cc0ee"/><path d="M3 1.4 L9.6 14.8 M14.6 9 L5 13.6" stroke="#e2483a" stroke-width="1.5"/></svg>
<svg class="a" style="left:593px;top:864px;" width="16" height="16" viewBox="0 0 16 16"><path d="M3.5 .5 H11 L14.5 4 V15.5 H3.5 Z" fill="#fff" stroke="#7a7a7a"/><path d="M11 .5 V4 H14.5" fill="none" stroke="#7a7a7a"/><path d="M9.6 2.6 Q6.6 1.6 6.2 5.4 L5 13 Q4.6 15 2.4 14 M2.6 7.6 H9" fill="none" stroke="#dc2626" stroke-width="2"/><circle cx="12.4" cy="9" r=".6" fill="#888"/><circle cx="12.4" cy="12" r=".6" fill="#888"/></svg>
<svg class="a" style="left:616.5px;top:864px;" width="16" height="16" viewBox="0 0 16 16"><path d="M1 3 H6 L7.4 4.6 H15 V14.6 H1 Z" fill="#f6d6d6" stroke="#df7d7d" stroke-width="1.1"/><path d="M1 7 H15" stroke="#df7d7d"/><path d="M3 5.6 H7" stroke="#df7d7d"/></svg>
<svg class="a" style="left:640px;top:864px;" width="16" height="16" viewBox="0 0 16 16"><path d="M.6 8 Q8 .2 15.4 8 Q8 15.8 .6 8 Z" fill="#f3f3f3" stroke="#d8a06a" stroke-width="1.1"/><circle cx="8" cy="7.6" r="3.6" fill="#6a9ad8"/><circle cx="8" cy="7.6" r="1.7" fill="#1d2b4a"/><path d="M1 7 Q8 -1 15 7" fill="none" stroke="#9a9a9a" stroke-width="1"/></svg>
<svg class="a" style="left:670.5px;top:864px;" width="16" height="16" viewBox="0 0 16 16"><rect x="1" y="1.6" width="13.6" height="13" fill="#fff" stroke="#666" stroke-width="1"/><path d="M6 4.6 H9.8 L12 6.8 V9.6 L9.8 11.8 H6 L3.8 9.6 V6.8 Z" fill="#d60a0a"/></svg>
<svg class="a" style="left:694px;top:864px;" width="16" height="16" viewBox="0 0 16 16"><rect x="1" y="1.6" width="13.6" height="13" fill="#fff" stroke="#b5b5b5" stroke-width="1.2"/><rect x="4.4" y="5" width="7" height="6.4" fill="#a2a2a2"/></svg>
<svg class="a" style="left:717px;top:864px;" width="16" height="16" viewBox="0 0 16 16"><rect x="1" y="1.6" width="13.6" height="13" fill="#fff" stroke="#b5b5b5" stroke-width="1.2"/><path d="M5.6 4.2 L11 8.2 L5.6 12.2 Z" fill="#a2a2a2"/></svg>
<svg class="a" style="left:740px;top:864px;" width="16" height="16" viewBox="0 0 16 16"><rect x="1" y="1.6" width="13.6" height="13" fill="#e4eefc" stroke="#9a9a9a" stroke-width="1.2"/><path d="M3.4 4.2 L8 8.2 L3.4 12.2 Z M8 4.2 L12.8 8.2 L8 12.2 Z" fill="#2f6fd8"/></svg>
<svg class="a" style="left:763.5px;top:864px;" width="16" height="16" viewBox="0 0 16 16"><rect x=".6" y=".6" width="12" height="11.6" fill="#9a9a9a"/><path d="M2.4 4 H10.6 M2.4 6.4 H7 M2.4 8.8 H7" stroke="#e8e8e8" stroke-width="1.2" stroke-dasharray="1.6 .8"/><rect x="7.4" y="7" width="8.4" height="8.6" fill="#8d8d8d" stroke="#fff" stroke-width=".6"/><rect x="9" y="8" width="5" height="2.6" fill="#e0e0e0"/></svg>
<svg class="a" style="left:795px;top:864px;" width="16" height="16" viewBox="0 0 16 16"><path d="M1 1 H15 V11.4 H10.4 L8 14.8 L5.6 11.4 H1 Z" fill="#fff" stroke="#2f6fd8" stroke-width="1.6"/><path d="M6.8 4.4 L8.4 3.2 V9.2 M6.4 9.4 H10.4" stroke="#1c8a2a" stroke-width="1.6" fill="none"/><path d="M6.6 4.6 L8.4 3.2" stroke="#d62020" stroke-width="1.6"/></svg>
<svg class="a" style="left:818.5px;top:864px;" width="16" height="16" viewBox="0 0 16 16"><rect x=".8" y="1" width="14.4" height="13.6" fill="#fff" stroke="#2f6fd8" stroke-width="1.5"/><rect x=".8" y="1" width="14.4" height="2" fill="#2f6fd8"/><path d="M3 6.2 H7 M9 10.6 H13" stroke="#e02020" stroke-width="1.8"/><path d="M9 6.2 H13 M3 10.6 H7" stroke="#1c9a2a" stroke-width="1.8"/></svg>
<svg class="a" style="left:842px;top:864px;" width="16" height="16" viewBox="0 0 16 16"><rect x=".8" y="1" width="14.4" height="13.6" fill="#fff" stroke="#2f6fd8" stroke-width="1.5"/><rect x=".8" y="1" width="14.4" height="2" fill="#2f6fd8"/><path d="M3 6.2 H7 M9 10.6 H13" stroke="#e02020" stroke-width="1.8"/><path d="M9 6.2 H13 M3 10.6 H7" stroke="#1c9a2a" stroke-width="1.8"/><circle cx="11" cy="12.6" r="3.2" fill="#c42222"/><rect x="9" y="12" width="4" height="1.3" fill="#f6d0d0"/></svg>
<svg class="a" style="left:865px;top:864px;" width="16" height="16" viewBox="0 0 16 16"><rect x="1.4" y="2" width="13.2" height="2.4" fill="#2f6fd8"/><path d="M4.4 4.4 H11.6 L9.4 7.4 L14.4 13.6 H1.6 L6.6 7.4 Z" fill="#4a8be6" stroke="#2f6fd8" stroke-width=".8"/></svg>
<svg class="a" style="left:888px;top:864px;" width="16" height="16" viewBox="0 0 16 16"><path d="M8 4.6 L14.4 11.4 H1.6 Z" fill="#4a8be6" stroke="#2f6fd8" stroke-width=".9"/></svg>
<svg class="a" style="left:911px;top:864px;" width="16" height="16" viewBox="0 0 16 16"><path d="M8 11.8 L14.4 5 H1.6 Z" fill="#4a8be6" stroke="#2f6fd8" stroke-width=".9"/></svg>
<svg class="a" style="left:934px;top:864px;" width="16" height="16" viewBox="0 0 16 16"><rect x="1.4" y="11.6" width="13.2" height="2.4" fill="#2f6fd8"/><path d="M4.4 11.6 H11.6 L9.4 8.6 L14.4 2.4 H1.6 L6.6 8.6 Z" fill="#4a8be6" stroke="#2f6fd8" stroke-width=".8"/></svg>
<svg class="a" style="left:957.5px;top:864px;" width="16" height="16" viewBox="0 0 16 16"><rect x=".8" y="1" width="14.4" height="13.6" fill="#fff" stroke="#2f6fd8" stroke-width="1.5"/><rect x=".8" y="1" width="14.4" height="2" fill="#2f6fd8"/><rect x="11" y="3" width="4" height="11" fill="#f2b02a"/><path d="M3 6.4 H6 M12 6 H14 M12 11 H14" stroke="#e02020" stroke-width="1.8"/><path d="M3 10.6 H6 M7 6.4 H9.6 M7 10.6 H9.6" stroke="#1c9a2a" stroke-width="1.8"/></svg>
<svg class="a" style="left:981.5px;top:864px;" width="16" height="16" viewBox="0 0 16 16"><text x="0" y="8.6" font-family="Liberation Sans,sans-serif" font-size="8.6" font-weight="bold" fill="#111" textLength="16" lengthAdjust="spacingAndGlyphs">ABC</text><path d="M.6 12.6 Q2.4 10.2 4.4 12.4 T8.2 12.4 T12 12.4 T15.6 12" fill="none" stroke="#dc2a2a" stroke-width="2"/></svg>
<div class="a" style="left:173.5px;top:863px;width:1px;height:18px;background:#909090;"></div>
<div class="a" style="left:250.5px;top:863px;width:1px;height:18px;background:#909090;"></div>
<div class="a" style="left:305.1px;top:863px;width:1px;height:18px;background:#909090;"></div>
<div class="a" style="left:359.9px;top:863px;width:1px;height:18px;background:#909090;"></div>
<div class="a" style="left:413.8px;top:863px;width:1px;height:18px;background:#909090;"></div>
<div class="a" style="left:468.7px;top:863px;width:1px;height:18px;background:#909090;"></div>
<div class="a" style="left:662.1px;top:863px;width:1px;height:18px;background:#909090;"></div>
<div class="a" style="left:786px;top:863px;width:1px;height:18px;background:#909090;"></div>
<div class="a" style="left:7px;top:884px;width:1431px;height:1px;background:#e4e4e4;"></div>
<div class="a" style="left:7px;top:885px;width:1431px;height:26.7px;background:#f0f0f0;"></div>
<div class="a" style="left:9px;top:887px;width:81px;height:24px;background:#f0f0f0;border-right:1.7px solid #6a6a6a;"></div>
<div class="a" style="left:9px;top:887.6px;width:79.3px;height:4.2px;background:#faa63c;"></div>
<svg class="a" style="left:13px;top:894.5px;" width="13" height="12.4" viewBox="0 0 13 12.4"><rect x=".5" y=".5" width="12" height="11.4" fill="#6f9fe2" stroke="#4f7fc8"/><rect x="2.6" y=".8" width="7.8" height="4" fill="#f4f8fd"/><rect x="4" y="1.4" width="1.2" height="2.4" fill="#6f9fe2"/><rect x="1.4" y="5.6" width="10.2" height="1.6" fill="#4f86d6"/><rect x="2.4" y="8" width="8.2" height="3.4" fill="#9ed36a"/></svg>
<div class="t" id="t77" style="top:895px;font-size:12px;color:#111;left:28.7px;letter-spacing:-0.72px;">error.log</div>
<svg class="a" style="left:71.8px;top:895px;" width="11" height="11" viewBox="0 0 11 11"><rect x="0" y="0" width="11" height="11" fill="#a74c70"/><path d="M2.6 2.6 L8.4 8.4 M8.4 2.6 L2.6 8.4" stroke="#fff" stroke-width="2"/></svg>
<div class="a" style="left:7px;top:911px;width:1431px;height:82px;background:#fff;"></div>
<div class="a" style="left:9px;top:911.7px;width:1429px;height:2px;background:#6e6e6e;"></div>
<div class="a" style="left:9px;top:911.7px;width:2px;height:80.6px;background:#6e6e6e;"></div>
<div class="a" style="left:1436px;top:911.7px;width:3px;height:82px;background:#6e6e6e;"></div>
<div class="a" style="left:7px;top:992.3px;width:1432px;height:1.5px;background:#6e6e6e;"></div>
<div class="a" style="left:1434px;top:913.7px;width:1px;height:76px;background:#ededed;"></div>
<div class="a" style="left:11px;top:990px;width:1424px;height:1px;background:#f0f0f0;"></div>
<div class="a" style="left:11px;top:913.7px;width:47.6px;height:76.1px;background:#e4e4e4;"></div>
<div class="a" style="left:60.4px;top:946.3px;width:1372.6px;height:16px;background:#e8e8ff;"></div>
<div class="a" style="left:1371.3px;top:915px;width:36.6px;height:16.2px;background:#ffff00;"></div>
<div class="a" style="left:59.2px;top:928px;width:727.6px;height:16.4px;background:#ffff00;"></div>
<div class="t" id="t78" style="top:916px;font-size:13.4px;color:#808080;left:33.2px;font-family:'Liberation Mono',monospace;">1</div>
<div class="t" id="t79" style="top:948px;font-size:13.4px;color:#808080;left:33.2px;font-family:'Liberation Mono',monospace;">2</div>
<div class="t" id="t80" style="top:916px;font-size:13.4px;color:#000;left:60px;font-family:'Liberation Mono',monospace;letter-spacing:.0267px;transform:scaleY(.9);transform-origin:0 10px;">[FolderId(2021-09-15_18-23-36-060_xTO)][2021-09-15T16:33:49.143634100Z]<span style="color:#ff9a3c">·</span>Upload<span style="color:#ff9a3c">·</span>finished,<span style="color:#ff9a3c">·</span>but<span style="color:#ff9a3c">·</span>returned<span style="color:#ff9a3c">·</span>unexpected<span style="color:#ff9a3c">·</span>status<span style="color:#ff9a3c">·</span>code:<span style="color:#ff9a3c">·</span>400.<span style="color:#ff9a3c">·</span>Response<span style="color:#ff9a3c">·</span>upload<span style="color:#ff9a3c">·</span>messages:<span style="color:#ff9a3c">·</span>{400:<span style="color:#ff9a3c">·</span>The<span style="color:#ff9a3c">·</span></div>
<div class="t" id="t81" style="top:932px;font-size:13.4px;color:#000;left:60px;font-family:'Liberation Mono',monospace;letter-spacing:.0267px;transform:scaleY(.9);transform-origin:0 10px;">obligatory<span style="color:#ff9a3c">·</span>requirement<span style="color:#ff9a3c">·</span>ID<span style="color:#ff9a3c">·</span>was<span style="color:#ff9a3c">·</span>not<span style="color:#ff9a3c">·</span>found<span style="color:#ff9a3c">·</span>on<span style="color:#ff9a3c">·</span>the<span style="color:#ff9a3c">·</span>test<span style="color:#ff9a3c">·</span>case,<span style="color:#ff9a3c">·</span>so<span style="color:#ff9a3c">·</span>the<span style="color:#ff9a3c">·</span>upload<span style="color:#ff9a3c">·</span>cannot<span style="color:#ff9a3c">·</span>be<span style="color:#ff9a3c">·</span>imported.</div>
<div class="t" id="t82" style="top:949px;font-size:13.4px;color:#000;left:60px;font-family:'Liberation Mono',monospace;letter-spacing:.0267px;transform:scaleY(.9);transform-origin:0 10px;">Test<span style="color:#ff9a3c">·</span>case(s)<span style="color:#ff9a3c">·</span>lacking<span style="color:#ff9a3c">·</span>the<span style="color:#ff9a3c">·</span>required<span style="color:#ff9a3c">·</span>attribute:<span style="color:#ff9a3c">·</span>ACC_activate_with_brake_0,<span style="color:#ff9a3c">·</span>ACC_approach_0,<span style="color:#ff9a3c">·</span>ACC_activate_0}</div>
<div class="a" style="left:7px;top:993.8px;width:1431px;height:4.2px;background:#f0f0f0;"></div>
<div class="a" style="left:674px;top:995px;width:1px;height:3px;background:#c8c8c8;"></div>
<div class="a" style="left:892px;top:995px;width:1px;height:3px;background:#c8c8c8;"></div>
<div class="a" style="left:1154px;top:995px;width:1px;height:3px;background:#c8c8c8;"></div>
<div class="a" style="left:1266px;top:995px;width:1px;height:3px;background:#c8c8c8;"></div>
<div class="a" style="left:1391px;top:995px;width:1px;height:3px;background:#c8c8c8;"></div>
<div class="a" style="left:1415px;top:995px;width:1px;height:3px;background:#c8c8c8;"></div>
</div>
</body>
</html>
